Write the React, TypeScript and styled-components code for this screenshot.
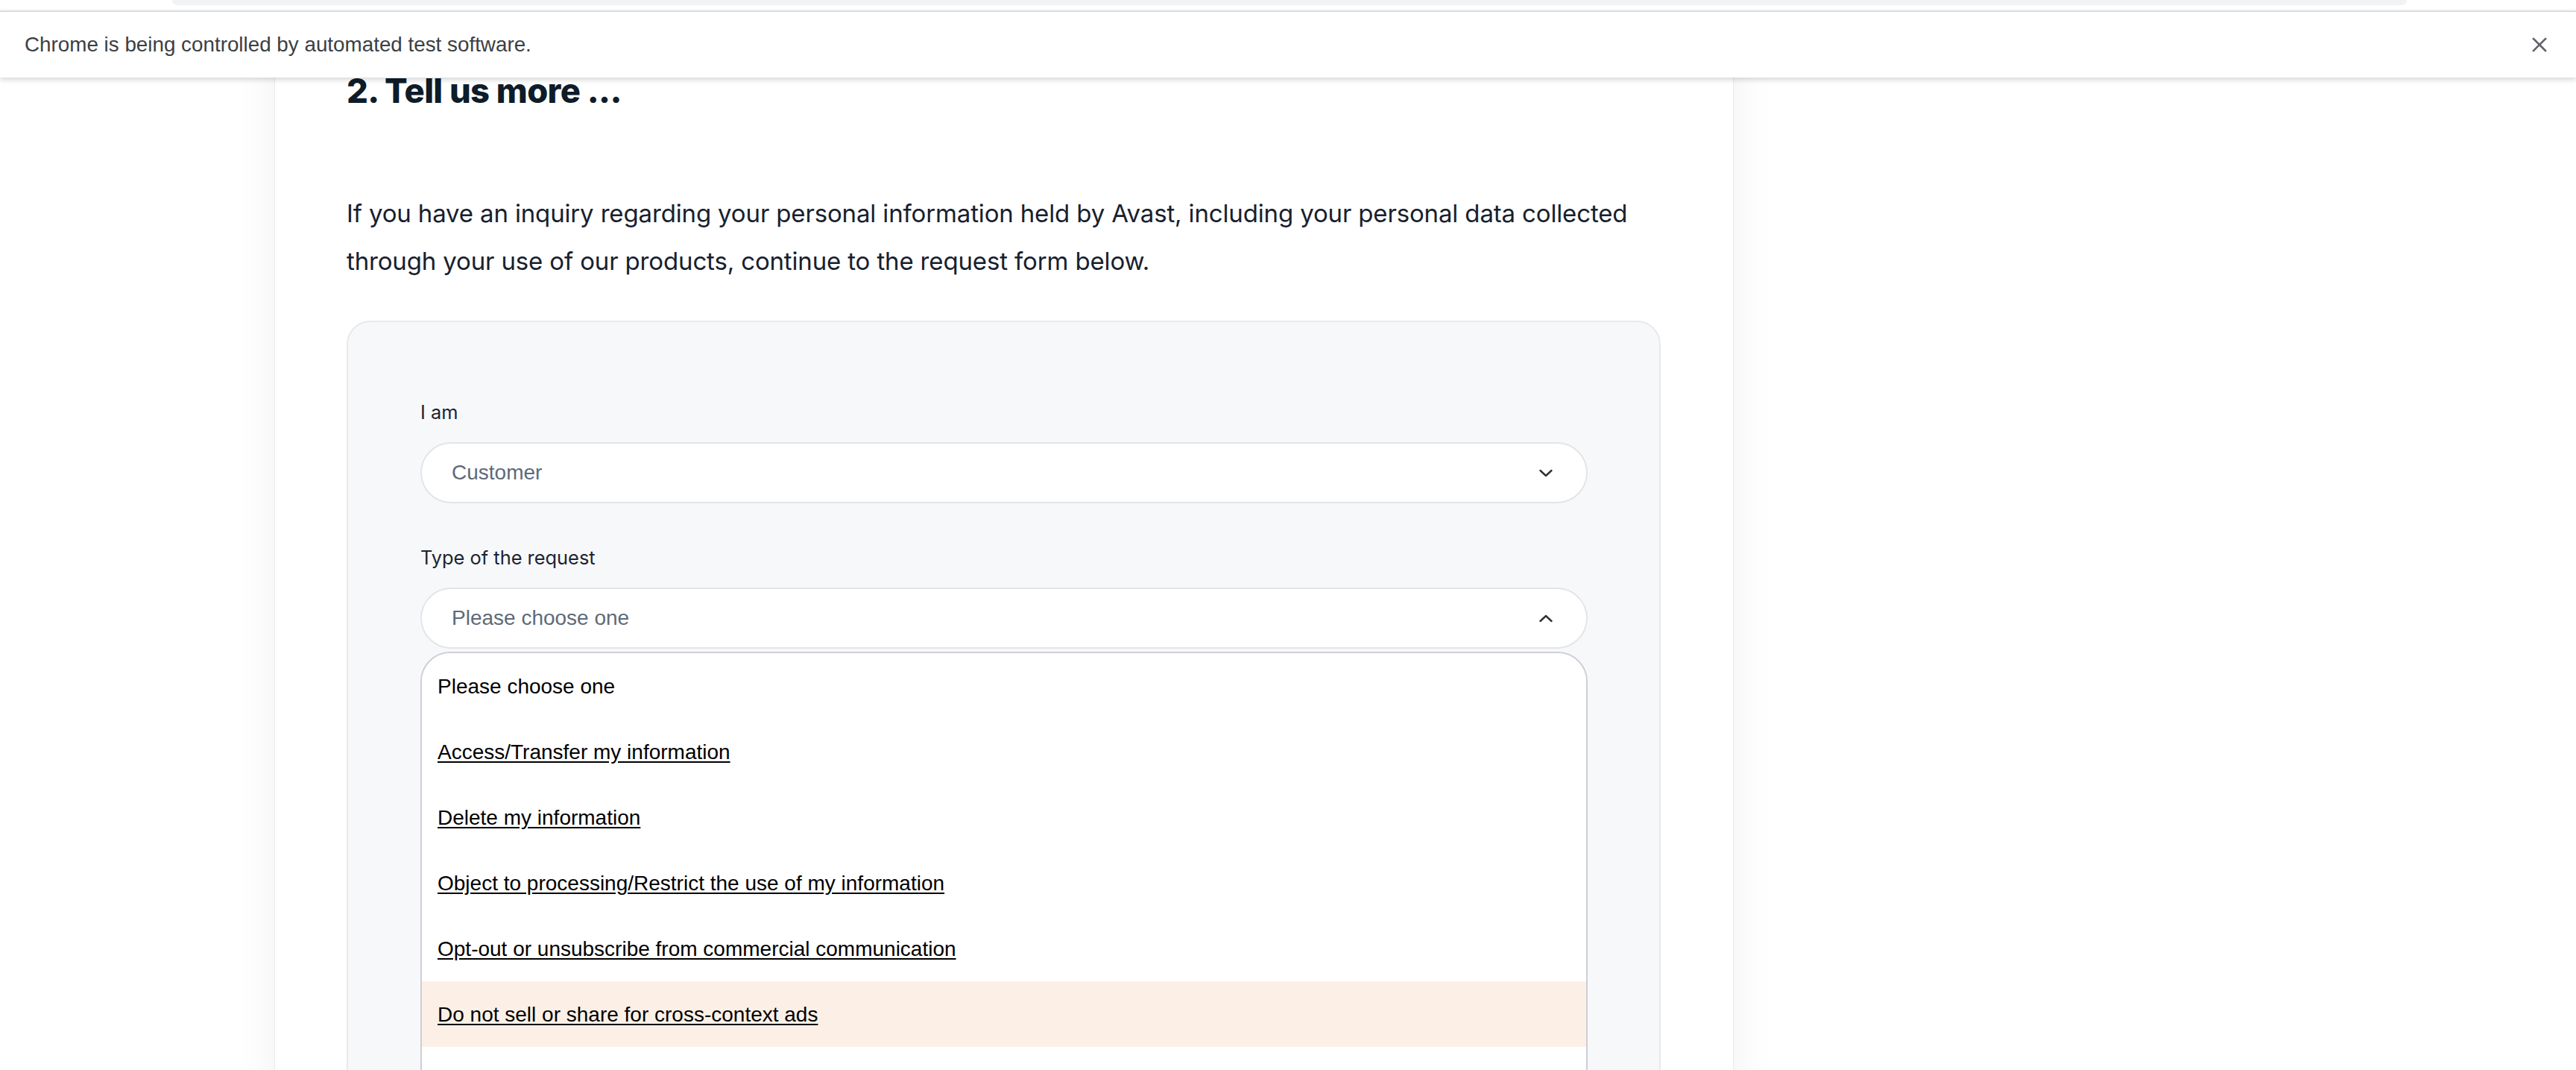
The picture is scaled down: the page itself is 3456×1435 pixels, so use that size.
import React from "react";
import styled, { createGlobalStyle } from "styled-components";

const GlobalStyle = createGlobalStyle`
  html, body { margin: 0; padding: 0; background: #ffffff; }
  body {
    width: 3456px;
    height: 1435px;
    overflow: hidden;
    font-family: Inter, "Liberation Sans", sans-serif;
  }
  #root { height: 100%; }
`;

const Window = styled.div`
  width: 3456px;
  height: 1435px;
  display: flex;
  flex-direction: column;
  overflow: hidden;
  background: #ffffff;
`;

const Toolbar = styled.div`
  flex: none;
  height: 14px;
  display: flex;
  padding: 0 227px 0 231px;
  background: #ffffff;
`;

const Omnibox = styled.div`
  flex: 1;
  height: 7px;
  background: #f1f3f4;
  border-radius: 0 0 16px 16px;
`;

const InfoBar = styled.div`
  flex: none;
  height: 88px;
  border-top: 2px solid #dadce0;
  background: #ffffff;
  display: flex;
  align-items: center;
  justify-content: space-between;
  padding: 0 38px 0 33px;
  box-shadow: 0 3px 7px rgba(0, 0, 0, 0.16);
  position: relative;
  z-index: 2;
  font-family: "Liberation Sans", Arial, sans-serif;
  font-size: 27.8px;
  color: #3c4043;
`;

const CloseButton = styled.button`
  border: 0;
  background: transparent;
  padding: 0;
  width: 22px;
  height: 22px;
  display: flex;
  align-items: center;
  justify-content: center;
  cursor: pointer;
`;

const Viewport = styled.main`
  flex: 1;
  overflow: hidden;
  position: relative;
  z-index: 1;
`;

const Page = styled.div`
  margin-top: -105px;
  padding-left: 368px;
  display: flex;
`;

const Card = styled.section`
  box-sizing: border-box;
  width: 1958px;
  background: #ffffff;
  border: 1px solid #ebebeb;
  box-shadow: 0 0 56px rgba(0, 0, 0, 0.06);
  padding: 96px 97px 400px 96px;
`;

const Heading = styled.h2`
  margin: 0;
  font-family: Inter, "Liberation Sans", sans-serif;
  font-size: 45.3px;
  line-height: 52px;
  font-weight: 800;
  letter-spacing: -0.6px;
  color: #0e1c2a;
`;

const Intro = styled.p`
  margin: 106px 0 48px;
  font-size: 33px;
  line-height: 64px;
  color: #17212e;
  letter-spacing: -0.15px;
`;

const FormPanel = styled.div`
  background: #f7f8fa;
  border: 2px solid #e7e9ec;
  border-radius: 32px;
  padding: 105px 96px 200px 97px;
  display: flex;
  flex-direction: column;
  gap: 57px;
`;

const Field = styled.div`
  display: flex;
  flex-direction: column;
`;

const Label = styled.label`
  font-size: 25.4px;
  line-height: 32px;
  color: #1b2431;
  margin-bottom: 24px;
`;

const Select = styled.div`
  box-sizing: border-box;
  height: 82px;
  background: #ffffff;
  border: 2px solid #e3e5e9;
  border-radius: 41px;
  display: flex;
  align-items: center;
  justify-content: space-between;
  padding: 0 45px 0 40px;
  font-family: "Liberation Sans", Arial, sans-serif;
  font-size: 28px;
  color: #5e6a78;
`;

const ListBox = styled.ul`
  list-style: none;
  margin: 4px 0 0;
  padding: 0 0 176px;
  background: #ffffff;
  border: 2px solid #cdced7;
  border-radius: 40px 40px 0 0;
  overflow: hidden;
`;

const Option = styled.li<{ $active?: boolean }>`
  height: 88px;
  display: flex;
  align-items: center;
  padding: 2px 0 0 21px;
  box-sizing: border-box;
  background: ${(p) => (p.$active ? "#fcf0e6" : "#ffffff")};
  font-family: "Liberation Sans", Arial, sans-serif;
  font-size: 28px;
  color: #000000;
`;

const OptionLink = styled.a`
  color: #000000;
  text-decoration: underline;
  text-underline-offset: 3px;
`;

const Chevron = ({ up }: { up?: boolean }) => (
  <svg width="18" height="11" viewBox="0 0 18 11" fill="none">
    <polyline
      points={up ? "1.5,9 9,2 16.5,9" : "1.5,2 9,9 16.5,2"}
      stroke="#2e3338"
      strokeWidth="2.4"
      strokeLinecap="round"
      strokeLinejoin="round"
    />
  </svg>
);

const CloseIcon = () => (
  <svg width="20" height="20" viewBox="0 0 20 20" fill="none">
    <path d="M2 2 L18 18 M18 2 L2 18" stroke="#5f6368" strokeWidth="2.6" strokeLinecap="square" />
  </svg>
);

const options = [
  { label: "Please choose one", link: false },
  { label: "Access/Transfer my information", link: true },
  { label: "Delete my information", link: true },
  { label: "Object to processing/Restrict the use of my information", link: true },
  { label: "Opt-out or unsubscribe from commercial communication", link: true },
  { label: "Do not sell or share for cross-context ads", link: true, active: true },
];

export default function App() {
  return (
    <>
      <GlobalStyle />
      <Window>
        <Toolbar>
          <Omnibox />
        </Toolbar>
        <InfoBar>
          <span>Chrome is being controlled by automated test software.</span>
          <CloseButton aria-label="Close">
            <CloseIcon />
          </CloseButton>
        </InfoBar>
        <Viewport>
          <Page>
            <Card>
              <Heading>2. Tell us more ...</Heading>
              <Intro>
                If you have an inquiry regarding your personal information held by Avast, including your
                personal data collected through your use of our products, continue to the request form below.
              </Intro>
              <FormPanel>
                <Field>
                  <Label>I am</Label>
                  <Select>
                    <span>Customer</span>
                    <Chevron />
                  </Select>
                </Field>
                <Field>
                  <Label>Type of the request</Label>
                  <Select>
                    <span>Please choose one</span>
                    <Chevron up />
                  </Select>
                  <ListBox>
                    {options.map((o) => (
                      <Option key={o.label} $active={o.active}>
                        {o.link ? <OptionLink>{o.label}</OptionLink> : o.label}
                      </Option>
                    ))}
                  </ListBox>
                </Field>
              </FormPanel>
            </Card>
          </Page>
        </Viewport>
      </Window>
    </>
  );
}
